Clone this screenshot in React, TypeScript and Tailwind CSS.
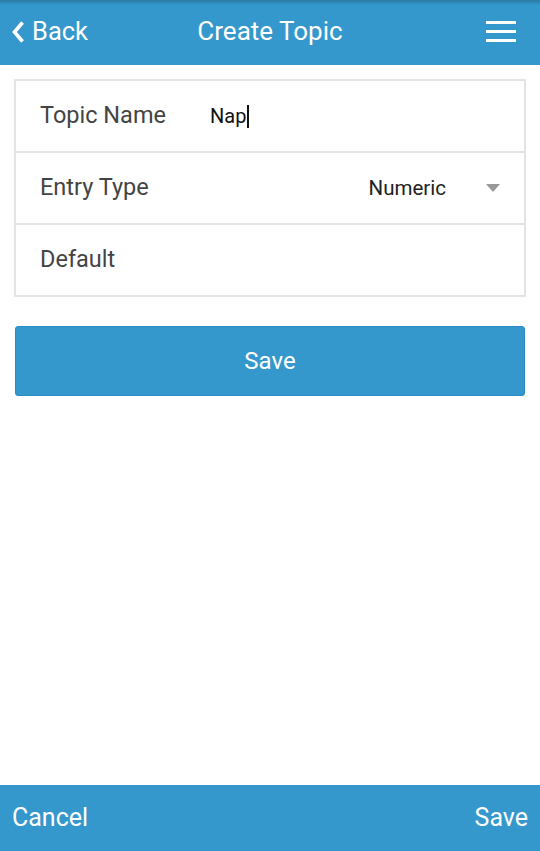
function FormRow({ label, children, last }: { label: string; children?: React.ReactNode; last?: boolean }) {
  return (
    <div className={"flex items-center pl-[24px] pr-[24px] " + (last ? "h-[70px]" : "h-[72px] border-b-2 border-[#e4e4e4]")}>
      <span className="w-[170px] shrink-0 text-[23.5px] text-[#444]">{label}</span>
      {children}
    </div>
  )
}

export default function App() {
  return (
    <div className="flex h-[851px] w-[540px] flex-col bg-white font-['Roboto',sans-serif]">
      {/* Header */}
      <header className="flex h-[65px] shrink-0 items-center bg-[linear-gradient(to_bottom,#2a78a3,#3498cc_5px)] px-[12px] pb-[2px] text-white">
        <button type="button" className="flex w-[120px] items-center gap-[8px] text-[25.5px]">
          <svg width="12" height="22" viewBox="0 0 12 22" fill="none">
            <path d="M10.5 1.5 L2.5 11 L10.5 20.5" stroke="white" strokeWidth="3.6" />
          </svg>
          Back
        </button>
        <h1 className="flex-1 text-center text-[26px]">Create Topic</h1>
        <div className="flex w-[120px] justify-end pr-[12px]">
          <div className="flex w-[30px] flex-col gap-[6px]">
            <span className="h-[3px] bg-white" />
            <span className="h-[3px] bg-white" />
            <span className="h-[3px] bg-white" />
          </div>
        </div>
      </header>

      <main className="flex-1 px-[14px] pt-[14px]">
        {/* Form */}
        <div className="border-2 border-[#e4e4e4]">
          <FormRow label="Topic Name">
            <span className="flex items-center text-[20px] text-[#111]">
              Nap<span className="ml-[1px] inline-block h-[23px] w-[2px] bg-[#111]" />
            </span>
          </FormRow>
          <FormRow label="Entry Type">
            <div className="flex flex-1 items-center justify-end">
              <span className="mr-[40px] text-[20.5px] text-[#222]">Numeric</span>
              <svg width="14" height="8" viewBox="0 0 14 8">
                <path d="M0 0 H14 L7 8 Z" fill="#999" />
              </svg>
            </div>
          </FormRow>
          <FormRow label="Default" last />
        </div>

        {/* Save */}
        <button
          type="button"
          className="mx-[1px] mt-[29px] flex h-[70px] w-[510px] items-center justify-center rounded-[3px] border border-[#2a8cc4] bg-[#3498cc] text-[24px] text-white"
        >
          Save
        </button>
      </main>

      {/* Footer */}
      <footer className="flex h-[66px] shrink-0 items-center justify-between bg-[#3498cc] px-[12px] text-[25px] text-white">
        <button type="button">Cancel</button>
        <button type="button">Save</button>
      </footer>
    </div>
  )
}
